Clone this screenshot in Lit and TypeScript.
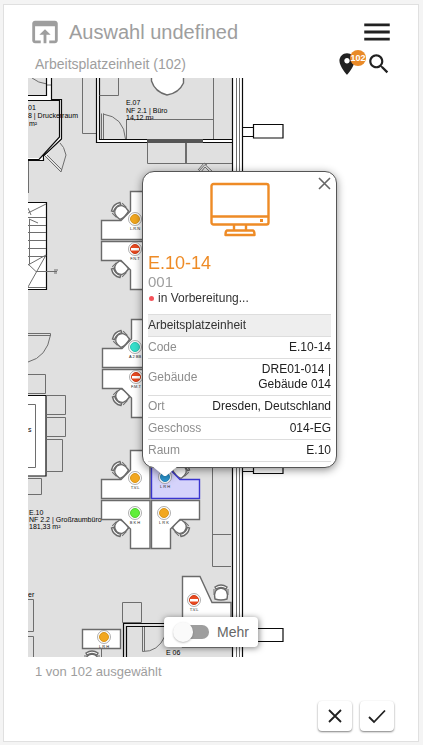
import { LitElement, html, svg, css } from "lit";
import { customElement, property } from "lit/decorators.js";

type Status = "orange" | "green" | "cyan" | "blue" | "blocked";

interface Marker {
  x: number;
  y: number;
  status: Status;
  label: string;
}

const MARKERS: Marker[] = [
  { x: 135, y: 219, status: "orange", label: "L.R.N" },
  { x: 135, y: 249, status: "blocked", label: "F.N.T" },
  { x: 135, y: 347, status: "cyan", label: "A 2 BB" },
  { x: 136, y: 377, status: "blocked", label: "F.M.T" },
  { x: 135, y: 478, status: "orange", label: "T.V.L" },
  { x: 165, y: 477, status: "blue", label: "L R H" },
  { x: 135, y: 513, status: "green", label: "B K H" },
  { x: 164, y: 513, status: "orange", label: "L R K" },
  { x: 194, y: 600, status: "blocked", label: "T.V.L" },
  { x: 104, y: 637, status: "orange", label: "L R H" },
];

const DETAILS = [
  ["Code", "E.10-14"],
  ["Gebäude", "DRE01-014 | Gebäude 014"],
  ["Ort", "Dresden, Deutschland"],
  ["Geschoss", "014-EG"],
  ["Raum", "E.10"],
];

@customElement("floor-plan")
export class FloorPlan extends LitElement {
  static styles = css`
    :host {
      display: block;
      overflow: hidden;
    }
    .plan {
      display: block;
      width: 100%;
      height: 100%;
      font-family: "Liberation Sans", Arial, sans-serif;
    }
    .floor { fill: #e0e0e0; }
    .thin { fill: none; stroke: #6e6e6e; stroke-width: 1; }
    .desk { fill: #fff; stroke: #6a6a6a; stroke-width: 1.4; }
    .active { fill: #d5d3fb; stroke: #3a35cf; stroke-width: 1.4; }
    .wall { fill: none; stroke: #0a0a0a; stroke-width: 1.2; }
    .white { fill: #fff; }
    .bar { fill: #555; }
    .room { font-size: 7px; fill: #000; }
    .tag { font-size: 4px; fill: #222; text-anchor: middle; }
    .halo { fill: #fff; stroke: #777; stroke-width: 0.6; }
    .orange { fill: #f2a71f; stroke: #d8951c; }
    .green { fill: #5fee3a; stroke: #4fd02e; }
    .cyan { fill: #35e0cc; stroke: #2cc4b2; }
    .blue { fill: #2e9fdc; stroke: #2a8cc4; }
    .blocked { fill: #ea4a20; stroke: #cc3c18; }
  `;

  private chair(x: number, y: number, angle: number) {
    return svg`<g transform="translate(${x} ${y}) rotate(${angle})">
      <path class="desk" d="M-6 6 Q-8 -4 0 -5 Q8 -4 6 6 Q0 8 -6 6Z"/>
      <path class="desk" d="M-6 -6 Q0 -10 6 -6 L5 -4 Q0 -7 -5 -4Z"/>
      <path class="thin" d="M-7 -4 L-7 2 M7 -4 L7 2"/>
    </g>`;
  }

  private leftPair(dx: number, dy: number) {
    return svg`<g transform="translate(${dx} ${dy})">
      ${this.chair(120, 470, -45)}
      ${this.chair(120, 528, -135)}
      <path class="desk" d="M101.500 479.500H121L130.500 470V450.500H150V498.500H101.500Z"/>
      <path class="desk" d="M101.500 500.500H150V548.500H130.500V529L121 519.500H101.500Z"/>
    </g>`;
  }

  private marker(m: Marker) {
    return svg`<g>
      <circle class="halo" cx=${m.x} cy=${m.y} r="6.500"/>
      <circle class=${m.status} cx=${m.x} cy=${m.y} r="4.500"/>
      ${m.status === "blocked"
        ? svg`<rect class="white" x=${m.x - 4} y=${m.y - 1} width="8" height="2.500"/>`
        : null}
      <text class="tag" x=${m.x} y=${m.y + 11}>${m.label}</text>
    </g>`;
  }

  render() {
    return html`<svg class="plan" role="img" aria-label="Grundriss">
      <g transform="translate(-28 -78)">
        <rect class="floor" x="28" y="78" width="205" height="579" />

        <rect class="white" x="28" y="95" width="23" height="5" />
        <rect class="white" x="47" y="78" width="4" height="22" />
        <path class="white" d="M59 100H61.500V138L43 160H28V158H41L59 137Z" />
        <path class="thin" d="M32 78Q38 83 47 84M47 85h4M82.500 78V133.500H96" />
        <path class="wall" d="M28 95.500H46.500V78M51.500 78V99.500H61.500V139L43.500 156V160.500H28M28 100.500H59.500V137L39 159.500H28" />
        <path class="thin" d="M45 156L61 172L66 155Q64 146 60 143M47 155L62 170M28.500 161V193" />
        <text class="room" x="28" y="110">01</text>
        <text class="room" x="28" y="118">8 | Druckerraum</text>
        <text class="room" x="29" y="126">m²</text>

        <rect class="white" x="97" y="139" width="135" height="4" />
        <rect class="white" x="97" y="78" width="2" height="64" />
        <path class="wall" d="M96.500 78V142.500H232M99.500 78V139.500H232" />
        <path class="thin" d="M99.500 95.500H118.500V78M213.500 78V139M126.500 139V119.500H213" />
        <path class="desk" d="M151.500 76V81Q155 92 167 95Q179 93 183.500 83V76Z" />
        <path class="thin" d="M101.500 113.500V139M103.500 113.500V139M103 114Q124 117 125.500 139" />
        <rect class="bar" x="147" y="139" width="56" height="4" />
        <path class="thin" d="M147.500 143V163.500H232M185.500 143V163M186.500 143V163" />
        <path class="thin" d="M198 172L205 164.500L213 172M201 172L205 167L210 172M198 170L204 163L207 165" />
        <text class="room" x="126" y="105">E.07</text>
        <text class="room" x="126" y="113">NF 2.1 | Büro</text>
        <text class="room" x="126" y="120">14,12 m²</text>

        <rect class="white" x="27" y="203" width="19" height="86" />
        <path class="wall" d="M28 202.500H46.500V289.500H28" />
        <path class="thin" d="M28 217.500H46M28 225.500H46M28 232.500H46M28 240.500H46M28 248.500H46M28 256.500H46M28 287.500H46M29.500 219V264M28 213L46 204M28 208L31 215M29 219L38 223M28 265L46 255L28 287M28 264L36 271.500H57M54 270L58 270M54 273L57 273" />
        <path class="thin" d="M28 333.500H50.500V335.500H28M50.500 335Q47 357 28 362M28 374.500H45.500V393.500H28" />
        <rect class="white" x="28" y="396" width="18" height="80" />
        <path class="wall" d="M28 395.500H46V476H28" />
        <path class="thin" d="M28 404.500H35.500V467.500H28M46.500 395.500H65.500V414.500H46.500M46.500 417.500H65.500V436.500H46.500M46.500 439.500H62.500V471.500H46.500M28 478.500H41.500V494.500H28" />
        <text class="room" x="28" y="432">s</text>
        <text class="room" x="29" y="515">E.10</text>
        <text class="room" x="29" y="522">NF 2.2 | Großraumbüro</text>
        <text class="room" x="29" y="529">181,33 m²</text>

        ${this.leftPair(0, -259)}
        ${this.leftPair(1, -131)}
        ${this.leftPair(0, 0)}
        ${this.chair(181, 470, 45)}
        ${this.chair(181, 528, 135)}
        <path class="active" d="M199.500 479.500H180L170.500 470V450.500H151.500V498.500H199.500Z" />
        <path class="desk" d="M199.500 500.500H151.500V548.500H170.500V529L180 519.500H199.500Z" />

        <path class="thin" d="M212.500 440V566.500H231M212.500 534.500H231" />
        <path class="desk" d="M182.500 576.500H200L212 602.500H231V647H182.500Z" />
        ${this.chair(221, 593, 0)}
        <path class="thin" d="M122.500 602.500H141.500V622.500H122.500Z" />
        <path class="wall" d="M123.500 657V623.500H182M126.500 657V626.500H182" />
        <path class="thin" d="M142.500 627V651.500Q158 652 165 636M144.500 627V651" />
        ${this.chair(92, 659, 0)}
        <path class="desk" d="M82.500 629.500H120.500V648.500H82.500Z" />
        <path class="thin" d="M101.500 649V657M28 599.500H33.500V631.500H28M28 636.500H33.500V657" />
        <text class="room" x="28" y="597">er</text>
        <text class="room" x="166" y="655">E 06</text>

        <rect class="white" x="233" y="78" width="10" height="579" />
        <path class="wall" d="M232.500 78V657M242.500 78V657M243 127.500H253M243 136.500H253M253.500 124.500H283V138H253.500ZM243 471.500H253M253.500 459.500H283V473.500H253.500ZM243 628.500H283V641.500H243" />
        <path class="thin" d="M236.500 78V657M239.500 78V657" />

        ${MARKERS.map((m) => this.marker(m))}
      </g>
    </svg>`;
  }
}

@customElement("unit-popup")
export class UnitPopup extends LitElement {
  static styles = css`
    :host {
      display: block;
      filter: drop-shadow(0 2px 4px rgba(0, 0, 0, 0.45));
    }
    .box {
      position: relative;
      box-sizing: border-box;
      padding: 10px 5px 5px;
      background: #fff;
      border: 1px solid #555;
      border-radius: 12px;
    }
    .tail {
      position: absolute;
      top: 100%;
      left: 9px;
      display: block;
      width: 26px;
      height: 10px;
      overflow: visible;
    }
    .tail-fill { fill: #fff; }
    .close {
      position: absolute;
      top: 4px;
      right: 4px;
      width: 15px;
      height: 15px;
      padding: 0;
      border: 0;
      background: none;
    }
    .cross { display: block; width: 15px; height: 15px; stroke: #666; stroke-width: 1.6; }
    .picture {
      display: block;
      width: 60px;
      height: 56px;
      margin: 0 auto 15px;
      fill: none;
      stroke: #ee8b26;
      stroke-width: 2.4;
      stroke-linejoin: round;
    }
    .led { fill: #ee8b26; stroke: none; }
    .name {
      margin: 0;
      font-size: 18px;
      font-weight: 400;
      line-height: 20px;
      color: #ee8b26;
    }
    .number { font-size: 15px; line-height: 18px; color: #9e9e9e; }
    .status {
      display: flex;
      align-items: center;
      gap: 4px;
      padding-left: 1px;
      font-size: 12px;
      line-height: 14px;
      color: #333;
    }
    .dot { width: 5px; height: 5px; border-radius: 50%; background: #f4535a; }
    .details {
      width: 100%;
      margin-top: 9px;
      border-collapse: separate;
      border-spacing: 0;
      border-top: 1px solid #ddd;
      font-size: 12px;
      line-height: 15px;
      color: #222;
    }
    th, td { padding: 3px 0; border-bottom: 1px solid #ddd; font-weight: 400; }
    th { text-align: left; color: #8e8e8e; }
    td { padding-left: 8px; text-align: right; }
    .group { background: #eee; color: #333; }
  `;

  render() {
    return html`<section class="box" aria-label="E.10-14">
      <button class="close" aria-label="Schließen">
        <svg class="cross" viewBox="0 0 15 15"><path d="M2 2L13 13M13 2L2 13" /></svg>
      </button>
      <svg class="picture" viewBox="0 0 60 56" aria-hidden="true">
        <rect x="1.500" y="2" width="57" height="40.500" rx="2" />
        <path d="M1.500 34.500H58.500M24 43V48M36 43V48M17 48.500H43Q44.500 49 44.500 53H15.500Q15.500 49 17 48.500Z" />
        <rect class="led" x="50" y="37" width="3" height="3" />
      </svg>
      <h2 class="name">E.10-14</h2>
      <div class="number">001</div>
      <div class="status"><span class="dot"></span>in Vorbereitung...</div>
      <table class="details">
        <thead>
          <tr><th class="group" colspan="2">Arbeitsplatzeinheit</th></tr>
        </thead>
        <tbody>
          ${DETAILS.map(
            ([key, value]) => html`<tr><th scope="row">${key}</th><td>${value}</td></tr>`,
          )}
        </tbody>
      </table>
      <svg class="tail" viewBox="0 0 26 10" aria-hidden="true">
        <path class="tail-fill" d="M0 -1H26L14 9H12Z" />
      </svg>
    </section>`;
  }
}

@customElement("app-root")
export class AppRoot extends LitElement {
  @property({ type: Number }) count = 102;

  static styles = css`
    :host {
      display: flex;
      box-sizing: border-box;
      min-height: 100vh;
      padding: 4px 4px 3px 3px;
      background: #f4f4f4;
      font-family: "Liberation Sans", Arial, sans-serif;
      color: #9e9e9e;
    }
    .card {
      flex: 1;
      display: flex;
      flex-direction: column;
      min-width: 0;
      padding: 10px 24px;
      background: #fff;
      border: 1px solid #e0e0e0;
    }
    .title-row { display: flex; align-items: center; gap: 7px; height: 34px; }
    .title { flex: 1; margin: 0; font-size: 20px; font-weight: 400; line-height: 24px; }
    .sub-row {
      display: flex;
      align-items: center;
      gap: 6px;
      height: 29px;
      padding: 0 2px 0 7px;
    }
    .subtitle { flex: 1; font-size: 14px; line-height: 20px; }
    .icon-button {
      position: relative;
      padding: 0;
      border: 0;
      background: none;
      color: #212121;
    }
    .large, .medium { display: block; fill: currentColor; }
    .large { width: 34px; height: 34px; }
    .medium { width: 26px; height: 26px; }
    .line-icon {
      display: block;
      width: 20px;
      height: 20px;
      fill: none;
      stroke: currentColor;
      stroke-width: 1.8;
    }
    .badge {
      position: absolute;
      top: -1px;
      right: -6px;
      width: 16px;
      height: 16px;
      border-radius: 50%;
      background: #e98a28;
      color: #fff;
      font-size: 9px;
      font-weight: 700;
      line-height: 16px;
      text-align: center;
    }
    .map { position: relative; flex: 1; display: flex; min-height: 480px; }
    .plan { flex: 1; min-width: 0; }
    .popup { position: absolute; left: 114px; top: 93px; width: 195px; }
    .more {
      position: absolute;
      bottom: 10px;
      left: 50%;
      transform: translateX(-50%);
      display: flex;
      align-items: center;
      gap: 8px;
      padding: 5px 9px;
      border-radius: 4px;
      background: #fff;
      box-shadow: 0 1px 6px rgba(0, 0, 0, 0.5);
      font-size: 14px;
      line-height: 20px;
      color: #666;
    }
    .toggle {
      appearance: none;
      display: flex;
      align-items: center;
      width: 31px;
      height: 14px;
      margin: 0 0 0 5px;
      border-radius: 7px;
      background: #9e9e9e;
    }
    .toggle::before {
      content: "";
      flex: none;
      width: 20px;
      height: 20px;
      margin-left: -5px;
      border-radius: 50%;
      background: #fafafa;
      box-shadow: 0 1px 2px rgba(0, 0, 0, 0.25);
    }
    .toggle:checked { justify-content: flex-end; }
    .summary { margin: 5px 0 19px; padding-left: 7px; font-size: 13px; line-height: 20px; }
    .actions { display: flex; justify-content: flex-end; gap: 8px; }
    .action {
      display: grid;
      place-items: center;
      width: 34px;
      height: 30px;
      padding: 0;
      border: 0;
      border-radius: 4px;
      background: #fff;
      color: #212121;
      box-shadow: 0 1px 2px rgba(0, 0, 0, 0.5);
    }
  `;

  render() {
    return html`<main class="card">
      <header class="title-row">
        <svg class="large" viewBox="0 0 24 24" aria-hidden="true">
          <path d="M19 4H5c-1.110 0-2 .9-2 2v12c0 1.100.89 2 2 2h4v-2H5V8h14v10h-4v2h4c1.100 0 2-.9 2-2V6c0-1.100-.89-2-2-2zm-7 6l-4 4h3v6h2v-6h3l-4-4z" />
        </svg>
        <h1 class="title">Auswahl undefined</h1>
        <button class="icon-button" aria-label="Menü">
          <svg class="large" viewBox="0 0 24 24"><path d="M3 18h18v-2H3v2zm0-5h18v-2H3v2zm0-7v2h18V6H3z" /></svg>
        </button>
      </header>
      <div class="sub-row">
        <span class="subtitle">Arbeitsplatzeinheit (${this.count})</span>
        <button class="icon-button" aria-label="Standorte">
          <svg class="medium" viewBox="0 0 24 24"><path d="M12 2C8.130 2 5 5.130 5 9c0 5.250 7 13 7 13s7-7.750 7-13c0-3.870-3.130-7-7-7zm0 9.500c-1.380 0-2.500-1.120-2.500-2.500s1.120-2.500 2.500-2.500 2.500 1.120 2.500 2.500-1.120 2.500-2.500 2.500z" /></svg>
          <span class="badge">${this.count}</span>
        </button>
        <button class="icon-button" aria-label="Suchen">
          <svg class="medium" viewBox="0 0 24 24"><path d="M15.500 14h-.79l-.28-.27C15.410 12.590 16 11.110 16 9.500 16 5.910 13.090 3 9.500 3S3 5.910 3 9.500 5.910 16 9.500 16c1.610 0 3.090-.59 4.230-1.570l.27.28v.79l5 4.990L20.490 19l-4.990-5zm-6 0C7.010 14 5 11.990 5 9.500S7.010 5 9.500 5 14 7.010 14 9.500 11.990 14 9.500 14z" /></svg>
        </button>
      </div>
      <div class="map">
        <floor-plan class="plan"></floor-plan>
        <unit-popup class="popup"></unit-popup>
        <label class="more"><input class="toggle" type="checkbox" role="switch" />Mehr</label>
      </div>
      <p class="summary">1 von ${this.count} ausgewählt</p>
      <div class="actions">
        <button class="action" aria-label="Abbrechen">
          <svg class="line-icon" viewBox="0 0 20 20"><path d="M4 4L16 16M16 4L4 16" /></svg>
        </button>
        <button class="action" aria-label="Bestätigen">
          <svg class="line-icon" viewBox="0 0 20 20"><path d="M2 11L7 16L18 4.500" /></svg>
        </button>
      </div>
    </main>`;
  }
}
